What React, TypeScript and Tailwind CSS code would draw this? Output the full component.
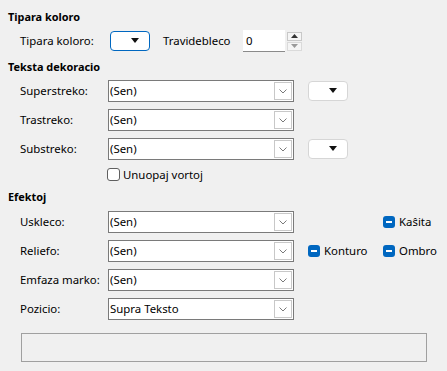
import React from "react";

function Chevron() {
  return (
    <svg width="8" height="5" viewBox="0 0 8 5" fill="none">
      <path d="M0.5 0.5 L4 4 L7.5 0.5" stroke="#7a7a7a" strokeWidth="1" />
    </svg>
  );
}

function Select({ value }: { value: string }) {
  return (
    <div className="w-[186px] h-[22px] border border-[#7a7a7a] bg-white flex items-stretch">
      <div className="flex-1 flex items-center pl-[1px] leading-none">{value}</div>
      <div className="w-[18px] my-[1px] mr-[1px] border border-[#c8c8c8] flex items-center justify-center">
        <Chevron />
      </div>
    </div>
  );
}

function Tri() {
  return (
    <svg width="8" height="7" viewBox="0 0 8 7">
      <path d="M0 0 H8 L4 5 Z" fill="#111" />
    </svg>
  );
}

function ColorBtn({ focused }: { focused?: boolean }) {
  return (
    <div
      className={
        "w-[40px] h-[20px] rounded-[4px] bg-white flex items-center justify-end pr-[10px] border " +
        (focused ? "border-[#0067c0]" : "border-[#d6d6d6]")
      }
    >
      <Tri />
    </div>
  );
}

function TriCheck({ label }: { label: string }) {
  return (
    <div className="flex items-center">
      <div className="w-[12px] h-[12px] rounded-[3px] bg-[#0067c0] flex items-center justify-center">
        <div className="w-[6px] h-[2px] bg-white" />
      </div>
      <span className="ml-[4px]">{label}</span>
    </div>
  );
}

function Row({ label, children }: { label: string; children: React.ReactNode }) {
  return (
    <div className="h-[22px] flex items-center">
      <div className="w-[88px] pl-[20px] box-content">{label}</div>
      {children}
    </div>
  );
}

export default function App() {
  return (
    <div className="w-[447px] h-[371px] bg-[#f0f0f0] text-[11.4px] text-black font-['Segoe_UI','Noto_Sans',sans-serif] overflow-hidden">
      <div className="pt-[9px] pl-[8px] h-[25px] leading-[16px] font-bold text-[10.9px]">Tipara koloro</div>
      <div className="mt-[6px] h-[20px] flex items-center">
        <div className="pl-[20px] w-[110px]">Tipara koloro:</div>
        <ColorBtn focused />
        <div className="ml-[13px] w-[80px]">Travidebleco</div>
        <div className="h-[22px] flex">
          <div className="w-[42px] bg-white border-b border-[#8a8a8a] flex items-center pl-[3px]">0</div>
          <div className="w-[18px] flex flex-col items-center justify-center gap-[1px] pl-[1px]">
            <div className="w-[15px] h-[9px] border border-[#c8c8c8] bg-[#f5f5f5] flex items-center justify-center">
              <svg width="7" height="4" viewBox="0 0 7 4"><path d="M0 4 L3.5 0 L7 4 Z" fill="#333" /></svg>
            </div>
            <div className="w-[15px] h-[9px] border border-[#dadada] bg-[#f5f5f5] flex items-center justify-center">
              <svg width="7" height="4" viewBox="0 0 7 4"><path d="M0 0 L7 0 L3.5 4 Z" fill="#9a9a9a" /></svg>
            </div>
          </div>
        </div>
      </div>

      <div className="mt-[8px] pl-[8px] h-[16px] leading-[16px] font-bold text-[10.9px]">Teksta dekoracio</div>
      <div className="mt-[5px] flex flex-col gap-[7px]">
        <Row label="Superstreko:">
          <Select value="(Sen)" />
          <div className="ml-[14px]"><ColorBtn /></div>
        </Row>
        <Row label="Trastreko:">
          <Select value="(Sen)" />
        </Row>
        <Row label="Substreko:">
          <Select value="(Sen)" />
          <div className="ml-[14px]"><ColorBtn /></div>
        </Row>
      </div>
      <div className="mt-[7px] h-[15px] flex items-center pl-[107px]">
        <div className="w-[13px] h-[13px] rounded-[3px] border border-[#5f5f5f] bg-white" />
        <span className="ml-[3px]">Unuopaj vortoj</span>
      </div>

      <div className="mt-[7px] pl-[8px] h-[16px] leading-[16px] font-bold text-[10.9px]">Efektoj</div>
      <div className="mt-[6px] flex flex-col gap-[7px]">
        <Row label="Uskleco:">
          <Select value="(Sen)" />
          <div className="ml-[89px]"><TriCheck label="Kaŝita" /></div>
        </Row>
        <Row label="Reliefo:">
          <Select value="(Sen)" />
          <div className="ml-[14px] w-[75px]"><TriCheck label="Konturo" /></div>
          <TriCheck label="Ombro" />
        </Row>
        <Row label="Emfaza marko:">
          <Select value="(Sen)" />
        </Row>
        <Row label="Pozicio:">
          <Select value="Supra Teksto" />
        </Row>
      </div>
      <div className="mt-[13px] ml-[21px] w-[406px] h-[29px] border border-[#a0a0a0] bg-[#f0f0f0]" />
    </div>
  );
}
